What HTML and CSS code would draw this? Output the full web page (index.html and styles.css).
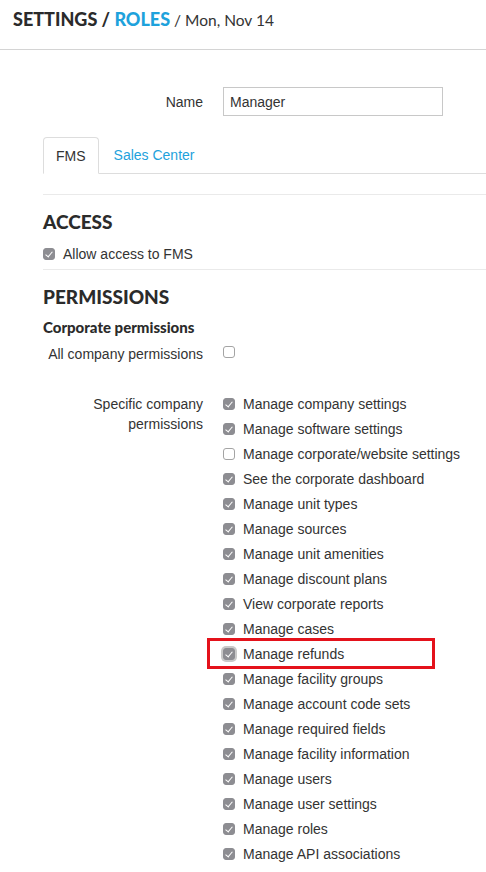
FILE: index.html
```html
<!DOCTYPE html>
<html>
<head>
<meta charset="utf-8">
<link rel="stylesheet" href="styles.css">
</head>
<body>
<header class="topbar">
  <h1 class="crumbs"><span class="crumb-main">SETTINGS / </span><span class="crumb-link">ROLES</span><span class="crumb-date"> / Mon, Nov 14</span></h1>
</header>
<main class="content">
  <div class="form-row name-row">
    <label class="form-label">Name</label>
    <div class="form-control"><input class="text-input" type="text" value="Manager"></div>
  </div>

  <ul class="tabs">
    <li class="tab active">FMS</li>
    <li class="tab link">Sales Center</li>
  </ul>

  <hr class="rule rule-top">

  <h2 class="section-title">ACCESS</h2>
  <div class="check-line"><span class="cb checked"></span><span>Allow access to FMS</span></div>

  <hr class="rule rule-mid">

  <h2 class="section-title perm-title">PERMISSIONS</h2>
  <h3 class="sub-title">Corporate permissions</h3>

  <div class="form-row all-row">
    <div class="form-label">All company permissions</div>
    <div class="form-control"><span class="cb"></span></div>
  </div>

  <div class="form-row specific-row">
    <div class="form-label multi">Specific company permissions</div>
    <ul class="perm-list">
      <li class="perm"><span class="cb checked"></span>Manage company settings</li>
      <li class="perm"><span class="cb checked"></span>Manage software settings</li>
      <li class="perm"><span class="cb"></span>Manage corporate/website settings</li>
      <li class="perm"><span class="cb checked"></span>See the corporate dashboard</li>
      <li class="perm"><span class="cb checked"></span>Manage unit types</li>
      <li class="perm"><span class="cb checked"></span>Manage sources</li>
      <li class="perm"><span class="cb checked"></span>Manage unit amenities</li>
      <li class="perm"><span class="cb checked"></span>Manage discount plans</li>
      <li class="perm"><span class="cb checked"></span>View corporate reports</li>
      <li class="perm"><span class="cb checked"></span>Manage cases</li>
      <li class="perm highlighted"><span class="cb checked focus"></span>Manage refunds<span class="callout"></span></li>
      <li class="perm"><span class="cb checked"></span>Manage facility groups</li>
      <li class="perm"><span class="cb checked"></span>Manage account code sets</li>
      <li class="perm"><span class="cb checked"></span>Manage required fields</li>
      <li class="perm"><span class="cb checked"></span>Manage facility information</li>
      <li class="perm"><span class="cb checked"></span>Manage users</li>
      <li class="perm"><span class="cb checked"></span>Manage user settings</li>
      <li class="perm"><span class="cb checked"></span>Manage roles</li>
      <li class="perm"><span class="cb checked"></span>Manage API associations</li>
    </ul>
  </div>
</main>
</body>
</html>
```

FILE: styles.css
```css
* { box-sizing: border-box; }
html, body { margin: 0; padding: 0; background: #fff; }
body {
  font-family: "Liberation Sans", Arial, sans-serif;
  font-size: 14px;
  color: #333;
  width: 486px;
  overflow: hidden;
}
.topbar {
  height: 50px;
  border-bottom: 1px solid #d4d4d4;
  padding: 8px 0 0 13px;
}
.crumbs {
  margin: 0;
  font-family: "Lato", sans-serif;
  font-size: 18px;
  line-height: 22px;
  font-weight: 900;
  color: #2b2b2b;
  white-space: nowrap;
}
.crumb-link { color: #1ea2dc; }
.crumb-date { font-weight: 400; font-size: 15.5px; color: #333; }

.content { padding-left: 43px; }

.form-row {
  display: grid;
  grid-template-columns: 160px 1fr;
  column-gap: 20px;
}
.form-label { text-align: right; line-height: 20px; }
.name-row { margin-top: 37px; align-items: center; }
.text-input {
  width: 220px;
  height: 29px;
  border: 1px solid #c8c8c8;
  padding: 0 6px;
  font: 14px "Liberation Sans", Arial, sans-serif;
  color: #333;
  outline: none;
  display: block;
}

.tabs {
  list-style: none;
  margin: 21px 0 0 0;
  padding: 0;
  display: flex;
  border-bottom: 1px solid #ddd;
  height: 37px;
}
.tab {
  height: 37px;
  line-height: 36px;
  padding: 0 14px;
}
.tab.active {
  border: 1px solid #ddd;
  border-bottom-color: #fff;
  border-radius: 4px 4px 0 0;
  padding: 0 12px;
  color: #333;
}
.tab.link { color: #1ea2dc; padding-left: 15px; }

.rule { border: 0; border-top: 1px solid #eaeaea; margin: 0; }
.rule-top { margin-top: 20px; }
.rule-mid { margin-top: 5px; }

.section-title {
  margin: 15px 0 0 0;
  font-family: "Lato", sans-serif;
  font-weight: 900;
  font-size: 19px;
  line-height: 24px;
  color: #2b2b2b;
}
.perm-title { margin-top: 15px; }
.sub-title {
  margin: 8px 0 0 0;
  font-family: "Lato", sans-serif;
  font-weight: 900;
  font-size: 15px;
  line-height: 20px;
  color: #2b2b2b;
}
.check-line {
  margin-top: 10px;
  display: flex;
  align-items: center;
  gap: 8px;
  line-height: 20px;
}

.cb {
  display: inline-block;
  width: 12px;
  height: 12px;
  border-radius: 3px;
  border: 1px solid #a4a4a4;
  background: #fff;
  flex: none;
  position: relative;
}
.cb.checked {
  background: #8d8d92;
  border-color: #8d8d92;
}
.cb.checked::after {
  content: "";
  position: absolute;
  left: 3px;
  top: 1px;
  width: 3px;
  height: 6px;
  border: solid #fff;
  border-width: 0 1.5px 1.5px 0;
  transform: rotate(40deg);
}
.cb.focus { box-shadow: 0 0 0 2px #c9c9c9; }

.all-row { margin-top: 7px; }
.all-row .form-control { display: flex; align-items: center; height: 20px; padding-bottom: 4px; }

.specific-row { margin-top: 27px; align-items: start; }
.specific-row .form-label { padding-top: 3px; padding-left: 40px; }
.perm-list { list-style: none; margin: 0; padding: 0; }
.perm {
  height: 25px;
  display: flex;
  align-items: center;
  gap: 8px;
  position: relative;
}
.callout {
  position: absolute;
  left: -16px;
  top: -3px;
  width: 228px;
  height: 31px;
  border: 3px solid #e4121b;
  pointer-events: none;
}
```
